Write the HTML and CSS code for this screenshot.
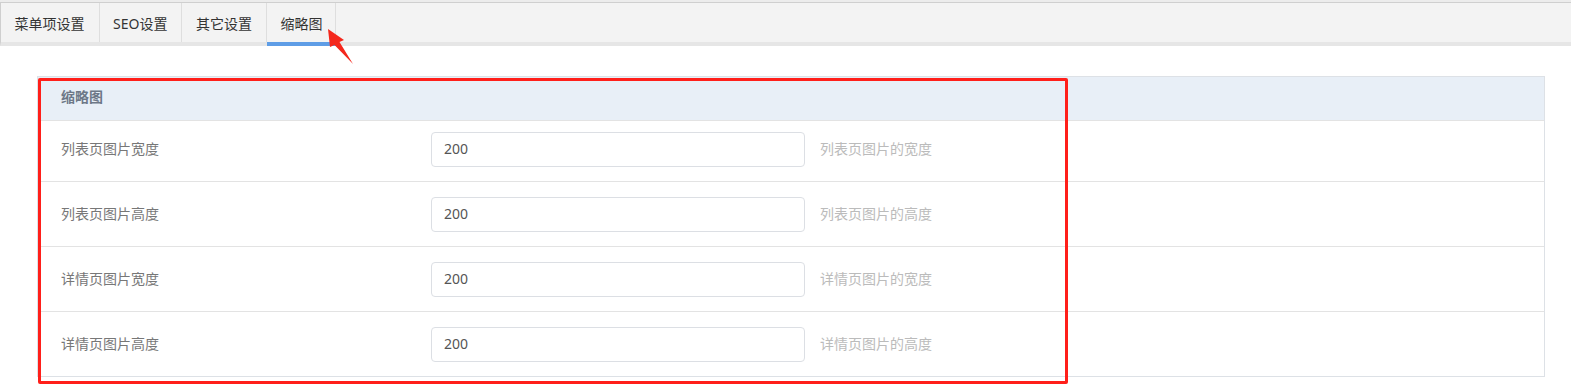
FILE: index.html
```html
<!DOCTYPE html>
<html lang="zh-CN">
<head>
    <meta charset="UTF-8">
    <title>缩略图设置</title>
    <link rel="stylesheet" href="styles.css">
</head>
<body>
    <div class="tabs">
        <ul class="tab-nav">
            <li>菜单项设置</li>
            <li>SEO设置</li>
            <li>其它设置</li>
            <li class="active">缩略图</li>
        </ul>
    </div>

    <div class="content">
        <div class="panel">
            <div class="panel-head">缩略图</div>
            <div class="form-row first">
                <label>列表页图片宽度</label>
                <input type="text" value="200">
                <span class="help">列表页图片的宽度</span>
            </div>
            <div class="form-row">
                <label>列表页图片高度</label>
                <input type="text" value="200">
                <span class="help">列表页图片的高度</span>
            </div>
            <div class="form-row">
                <label>详情页图片宽度</label>
                <input type="text" value="200">
                <span class="help">详情页图片的宽度</span>
            </div>
            <div class="form-row">
                <label>详情页图片高度</label>
                <input type="text" value="200">
                <span class="help">详情页图片的高度</span>
            </div>
        </div>
    </div>

    <!-- annotation marks -->
    <div class="mark-box"></div>
    <svg class="mark-arrow" width="40" height="50" viewBox="320 20 40 50">
        <polygon points="328,29 344,40 339.5,42 353,64 334.5,45 330,47" fill="#f4271c"/>
    </svg>
</body>
</html>
```

FILE: styles.css
```css
* {
    margin: 0;
    padding: 0;
    box-sizing: border-box;
}

body {
    font-family: "Noto Sans", "Noto Sans CJK SC", sans-serif;
    font-size: 14px;
    color: #333;
    background: #fff;
}

.tabs {
    border-top: 2px solid #ececec;
}

.tab-nav {
    list-style: none;
    display: flex;
    height: 44px;
    background: #f3f3f3;
    border-top: 1px solid #cfcfcf;
    border-left: 1px solid #cfcfcf;
    border-bottom: 4px solid #e6e6e6;
}

.tab-nav li {
    padding: 1px 14px 0 13.5px;
    line-height: 39px;
    border-right: 1px solid #dedede;
    color: #333;
    white-space: nowrap;
}

.tab-nav li.active {
    height: 43px;
    padding-right: 13px;
    border-bottom: 4px solid #5e9de6;
}

.content {
    padding: 30px 26px 0 37px;
}

.panel {
    border: 1px solid #dde1e6;
}

.panel-head {
    height: 43px;
    line-height: 39px;
    padding-left: 23px;
    background: #e8eff7;
    color: #6d7887;
    font-weight: bold;
}

.form-row {
    display: flex;
    align-items: center;
    padding: 15px 0 14px 23px;
    border-top: 1px solid #e3e3e3;
}

.form-row.first {
    padding-top: 11px;
}

.form-row label {
    width: 370px;
    padding-bottom: 4px;
    color: #777;
}

.form-row input {
    width: 374px;
    height: 35px;
    padding: 0 12px 3px;
    border: 1px solid #dcdfe4;
    border-radius: 4px;
    font-family: inherit;
    font-size: 14px;
    color: #555;
}

.help {
    margin-left: 15px;
    padding-bottom: 4px;
    color: #bbb;
}

.mark-box {
    position: absolute;
    left: 38px;
    top: 78px;
    width: 1030px;
    height: 306px;
    border: 3px solid #ff1f1a;
    border-radius: 2px;
}

.mark-arrow {
    position: absolute;
    left: 320px;
    top: 20px;
}
```
